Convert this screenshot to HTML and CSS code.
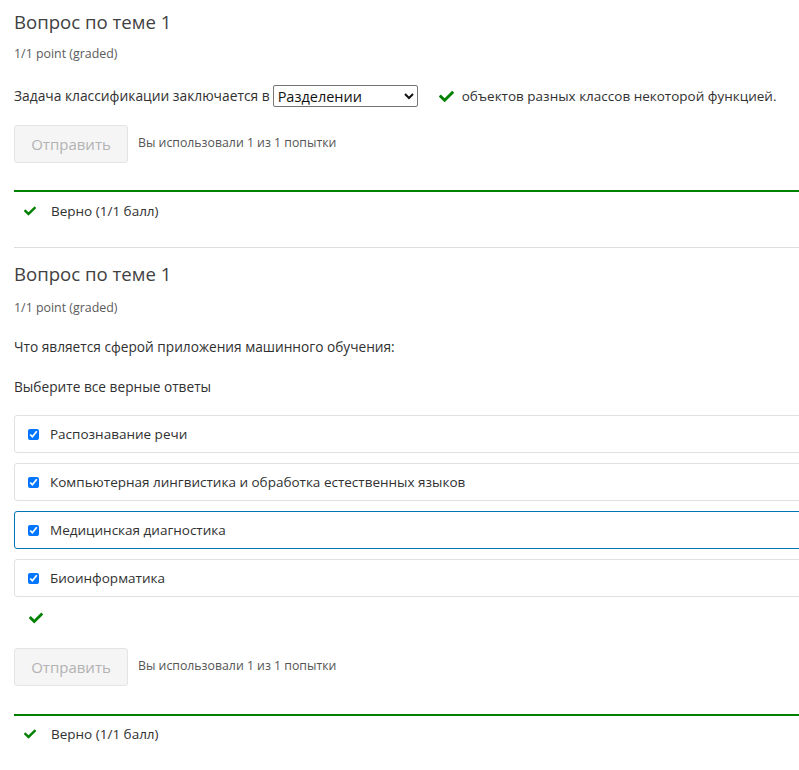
FILE: index.html
```html
<!DOCTYPE html>
<html lang="ru">
<head>
<meta charset="utf-8">
<title>Вопросы</title>
<link rel="stylesheet" href="styles.css">
</head>
<body>
<div class="page">
  <section class="problem first">
    <h3 class="title">Вопрос по теме 1</h3>
    <div class="points">1/1 point (graded)</div>
    <div class="prompt">
      <span>Задача классификации заключается в</span>
      <select class="dropdown"><option>Разделении</option></select>
      <svg class="check big" viewBox="0 0 512 512"><path d="M173.898 439.404l-166.4-166.4c-9.997-9.997-9.997-26.206 0-36.204l36.203-36.204c9.997-9.998 26.207-9.998 36.204 0L192 312.69 432.095 72.596c9.997-9.997 26.207-9.997 36.204 0l36.203 36.204c9.997 9.997 9.997 26.206 0 36.204l-294.4 294.401c-9.998 9.997-26.207 9.997-36.204-.001z"/></svg>
      <span class="tail">объектов разных классов некоторой функцией.</span>
    </div>
    <div class="actions">
      <button class="submit" disabled>Отправить</button>
      <span class="attempts">Вы использовали 1 из 1 попытки</span>
    </div>
    <div class="feedback">
      <svg class="check small" viewBox="0 0 512 512"><path d="M173.898 439.404l-166.4-166.4c-9.997-9.997-9.997-26.206 0-36.204l36.203-36.204c9.997-9.998 26.207-9.998 36.204 0L192 312.69 432.095 72.596c9.997-9.997 26.207-9.997 36.204 0l36.203 36.204c9.997 9.997 9.997 26.206 0 36.204l-294.4 294.401c-9.998 9.997-26.207 9.997-36.204-.001z"/></svg>
      <span>Верно (1/1 балл)</span>
    </div>
  </section>
  <section class="problem second">
    <h3 class="title">Вопрос по теме 1</h3>
    <div class="points">1/1 point (graded)</div>
    <p class="text q">Что является сферой приложения машинного обучения:</p>
    <p class="text hint">Выберите все верные ответы</p>
    <div class="options">
      <label class="option"><input type="checkbox" checked><span>Распознавание речи</span></label>
      <label class="option"><input type="checkbox" checked><span>Компьютерная лингвистика и обработка естественных языков</span></label>
      <label class="option focused"><input type="checkbox" checked><span>Медицинская диагностика</span></label>
      <label class="option"><input type="checkbox" checked><span>Биоинформатика</span></label>
    </div>
    <div class="status">
      <svg class="check mid" viewBox="0 0 512 512"><path d="M173.898 439.404l-166.4-166.4c-9.997-9.997-9.997-26.206 0-36.204l36.203-36.204c9.997-9.998 26.207-9.998 36.204 0L192 312.69 432.095 72.596c9.997-9.997 26.207-9.997 36.204 0l36.203 36.204c9.997 9.997 9.997 26.206 0 36.204l-294.4 294.401c-9.998 9.997-26.207 9.997-36.204-.001z"/></svg>
    </div>
    <div class="actions">
      <button class="submit" disabled>Отправить</button>
      <span class="attempts">Вы использовали 1 из 1 попытки</span>
    </div>
    <div class="feedback">
      <svg class="check small" viewBox="0 0 512 512"><path d="M173.898 439.404l-166.4-166.4c-9.997-9.997-9.997-26.206 0-36.204l36.203-36.204c9.997-9.998 26.207-9.998 36.204 0L192 312.69 432.095 72.596c9.997-9.997 26.207-9.997 36.204 0l36.203 36.204c9.997 9.997 9.997 26.206 0 36.204l-294.4 294.401c-9.998 9.997-26.207 9.997-36.204-.001z"/></svg>
      <span>Верно (1/1 балл)</span>
    </div>
  </section>
</div>
</body>
</html>
```
FILE: styles.css
```css
html, body {
  margin: 0;
  padding: 0;
  background: #fff;
  overflow: hidden;
}
body {
  font-family: "Open Sans", "Noto Sans", sans-serif;
  color: #313131;
  font-size: 14px;
}
.page {
  padding-left: 14px;
  margin-right: -20px;
}
.problem {
  display: flex;
  flex-direction: column;
}
.problem.first {
  border-bottom: 1px solid #ddd;
  padding-bottom: 26px;
}
.title {
  margin: 0;
  font-size: 18.6px;
  line-height: 24px;
  font-weight: 400;
  color: #414141;
}
.first .title { margin-top: 10px; }
.second .title { margin-top: 14px; }
.points {
  font-size: 12.4px;
  line-height: 16px;
  color: #5b5b5b;
  margin-top: 12px;
}
.second .points { margin-top: 14px; }
.prompt {
  display: flex;
  align-items: center;
  height: 22px;
  margin-top: 23px;
  line-height: 20px;
  font-size: 13.8px;
}
.prompt .tail {
  font-size: 13.5px;
}
.dropdown {
  font-family: "Open Sans", "Noto Sans", sans-serif;
  font-size: 14.5px;
  color: #111;
  height: 22px;
  width: 145px;
  margin: 0 0 0 3px;
  padding: 0;
  border: 1px solid #767676;
  border-radius: 2px;
  background: #fff;
}
.check {
  fill: #008100;
  display: block;
}
.check.big {
  width: 15px;
  height: 15px;
  margin: 0 8px 0 21px;
}
.check.small {
  width: 12px;
  height: 12px;
}
.check.mid {
  width: 14px;
  height: 14px;
}
.actions {
  display: flex;
  align-items: center;
  margin-top: 18px;
}
.submit {
  width: 114px;
  height: 38px;
  font-family: "Open Sans", "Noto Sans", sans-serif;
  font-size: 15px;
  color: #b2b2b2;
  background: #f5f5f5;
  border: 1px solid #e4e4e4;
  border-radius: 3px;
  padding: 0;
}
.attempts {
  font-size: 12.3px;
  color: #555;
  margin-left: 10px;
  margin-bottom: 4px;
}
.feedback {
  display: flex;
  align-items: center;
  margin-top: 27px;
  border-top: 2px solid #008100;
  padding: 9px 0 0 10px;
  line-height: 20px;
  font-size: 13.5px;
}
.feedback .check {
  margin-right: 15px;
}
.text {
  margin: 0;
  line-height: 20px;
  font-size: 13.7px;
}
.q { margin-top: 21px; }
.hint { margin-top: 20px; }
.options {
  display: flex;
  flex-direction: column;
  gap: 10px;
  margin-top: 18px;
}
.option {
  display: flex;
  align-items: center;
  height: 38px;
  box-sizing: border-box;
  border: 1px solid #e1e1e1;
  border-radius: 3px;
  padding-left: 13px;
  font-size: 13.5px;
}
.option.focused {
  border-color: #0075b4;
}
.option input {
  width: 11px;
  height: 11px;
  margin: 0 11px 0 0;
}
.status {
  padding: 14px 0 0 15px;
  height: 14px;
}
.second .actions { margin-top: 23px; }
.second .feedback { margin-top: 28px; padding-top: 8px; }
```
